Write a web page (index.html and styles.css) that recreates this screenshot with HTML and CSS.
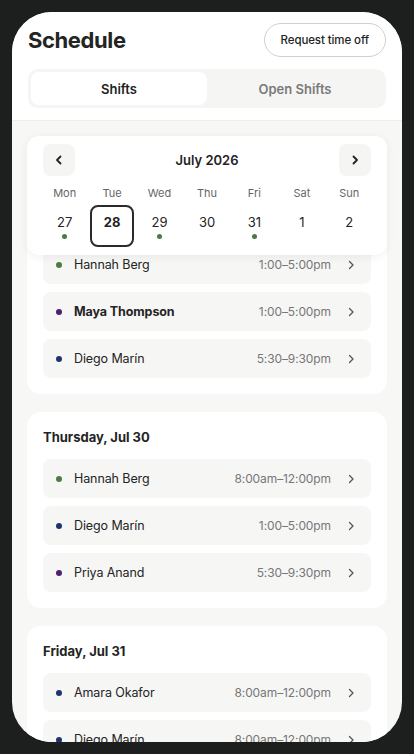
FILE: index.html
```html
<!DOCTYPE html>
<html lang="en">

<head>
  <meta charset="UTF-8">
  <title>Schedule</title>
  <link rel="stylesheet" href="styles.css">
</head>

<body>
  <div class="phone">
    <div class="header">
      <div class="top-row">
        <h1>Schedule</h1>
        <button class="request-btn">Request time off</button>
      </div>
      <div class="tabs">
        <div class="tab active">Shifts</div>
        <div class="tab">Open Shifts</div>
      </div>
    </div>

    <div class="content">
      <div class="calendar">
        <div class="cal-head">
          <button class="nav-btn">
            <svg width="12" height="12" viewBox="0 0 12 12"><path d="M7.5 2.5 4 6l3.5 3.5" fill="none" stroke="#222" stroke-width="1.8" stroke-linecap="round" stroke-linejoin="round"/></svg>
          </button>
          <div class="month">July 2026</div>
          <button class="nav-btn">
            <svg width="12" height="12" viewBox="0 0 12 12"><path d="M4.5 2.5 8 6l-3.5 3.5" fill="none" stroke="#222" stroke-width="1.8" stroke-linecap="round" stroke-linejoin="round"/></svg>
          </button>
        </div>
        <div class="week">
          <div class="dname">Mon</div>
          <div class="dname">Tue</div>
          <div class="dname">Wed</div>
          <div class="dname">Thu</div>
          <div class="dname">Fri</div>
          <div class="dname">Sat</div>
          <div class="dname">Sun</div>

          <div class="day"><span>27</span><i class="mark"></i></div>
          <div class="day selected"><span>28</span></div>
          <div class="day"><span>29</span><i class="mark"></i></div>
          <div class="day"><span>30</span></div>
          <div class="day"><span>31</span><i class="mark"></i></div>
          <div class="day"><span>1</span></div>
          <div class="day"><span>2</span></div>
        </div>
      </div>

      <div class="list">
        <div class="card">
          <div class="card-title">Wednesday, Jul 29</div>
          <div class="rows">
            <div class="row"><i class="dot green"></i><span class="name">Hannah Berg</span><span class="time">1:00–5:00pm</span><svg class="chev" width="12" height="12" viewBox="0 0 12 12"><path d="M4.5 2.5 8 6l-3.5 3.5" fill="none" stroke="#555" stroke-width="1.3" stroke-linecap="round" stroke-linejoin="round"/></svg></div>
            <div class="row"><i class="dot purple"></i><span class="name bold">Maya Thompson</span><span class="time">1:00–5:00pm</span><svg class="chev" width="12" height="12" viewBox="0 0 12 12"><path d="M4.5 2.5 8 6l-3.5 3.5" fill="none" stroke="#555" stroke-width="1.3" stroke-linecap="round" stroke-linejoin="round"/></svg></div>
            <div class="row"><i class="dot navy"></i><span class="name">Diego Marín</span><span class="time">5:30–9:30pm</span><svg class="chev" width="12" height="12" viewBox="0 0 12 12"><path d="M4.5 2.5 8 6l-3.5 3.5" fill="none" stroke="#555" stroke-width="1.3" stroke-linecap="round" stroke-linejoin="round"/></svg></div>
          </div>
        </div>

        <div class="card">
          <div class="card-title">Thursday, Jul 30</div>
          <div class="rows">
            <div class="row"><i class="dot green"></i><span class="name">Hannah Berg</span><span class="time">8:00am–12:00pm</span><svg class="chev" width="12" height="12" viewBox="0 0 12 12"><path d="M4.5 2.5 8 6l-3.5 3.5" fill="none" stroke="#555" stroke-width="1.3" stroke-linecap="round" stroke-linejoin="round"/></svg></div>
            <div class="row"><i class="dot navy"></i><span class="name">Diego Marín</span><span class="time">1:00–5:00pm</span><svg class="chev" width="12" height="12" viewBox="0 0 12 12"><path d="M4.5 2.5 8 6l-3.5 3.5" fill="none" stroke="#555" stroke-width="1.3" stroke-linecap="round" stroke-linejoin="round"/></svg></div>
            <div class="row"><i class="dot purple"></i><span class="name">Priya Anand</span><span class="time">5:30–9:30pm</span><svg class="chev" width="12" height="12" viewBox="0 0 12 12"><path d="M4.5 2.5 8 6l-3.5 3.5" fill="none" stroke="#555" stroke-width="1.3" stroke-linecap="round" stroke-linejoin="round"/></svg></div>
          </div>
        </div>

        <div class="card">
          <div class="card-title">Friday, Jul 31</div>
          <div class="rows">
            <div class="row"><i class="dot navy"></i><span class="name">Amara Okafor</span><span class="time">8:00am–12:00pm</span><svg class="chev" width="12" height="12" viewBox="0 0 12 12"><path d="M4.5 2.5 8 6l-3.5 3.5" fill="none" stroke="#555" stroke-width="1.3" stroke-linecap="round" stroke-linejoin="round"/></svg></div>
            <div class="row"><i class="dot navy"></i><span class="name">Diego Marín</span><span class="time">8:00am–12:00pm</span><svg class="chev" width="12" height="12" viewBox="0 0 12 12"><path d="M4.5 2.5 8 6l-3.5 3.5" fill="none" stroke="#555" stroke-width="1.3" stroke-linecap="round" stroke-linejoin="round"/></svg></div>
          </div>
        </div>
      </div>
    </div>
  </div>
</body>

</html>
```

FILE: styles.css
```css
body {
  margin: 0;
  background: #1d1e1e;
  font-family: Inter, 'Noto Sans', sans-serif;
  color: #242424;
}

.phone {
  margin: 12px;
  width: 390px;
  height: 730px;
  border-radius: 40px;
  overflow: hidden;
  background: #f7f7f6;
  display: flex;
  flex-direction: column;
}

.header {
  background: #fff;
  padding: 11px 16px 12px;
  border-bottom: 1px solid #ededec;
}

.top-row {
  display: flex;
  align-items: center;
  justify-content: space-between;
  height: 34px;
}

h1 {
  margin: 0;
  font-size: 22px;
  font-weight: 700;
  letter-spacing: -0.4px;
}

.request-btn {
  height: 34px;
  padding: 0 16px;
  border: 1px solid #cfcfcd;
  border-radius: 17px;
  background: #fff;
  font-family: inherit;
  font-size: 11.5px;
  font-weight: 500;
  letter-spacing: -0.1px;
  color: #222;
}

.tabs {
  margin-top: 12px;
  display: flex;
  padding: 3px;
  background: #f5f5f4;
  border-radius: 10px;
}

.tab {
  flex: 1;
  height: 33px;
  display: flex;
  align-items: center;
  justify-content: center;
  font-size: 13px;
  font-weight: 600;
  color: #7a7a7a;
  border-radius: 8px;
}

.tab.active {
  background: #fff;
  color: #222;
}

.content {
  position: relative;
  flex: 1;
  overflow: hidden;
}

.calendar {
  position: absolute;
  top: 15px;
  left: 15px;
  right: 15px;
  z-index: 2;
  background: #fff;
  border-radius: 12px;
  padding: 8px 16px;
  box-shadow: 0 2px 10px rgba(0, 0, 0, 0.06);
}

.cal-head {
  display: flex;
  align-items: center;
  justify-content: space-between;
}

.nav-btn {
  width: 32px;
  height: 32px;
  border: none;
  border-radius: 8px;
  background: #f5f5f4;
  display: flex;
  align-items: center;
  justify-content: center;
  padding: 0;
}

.month {
  font-size: 13px;
  font-weight: 600;
}

.week {
  margin-top: 9px;
  display: grid;
  grid-template-columns: repeat(7, 1fr);
  column-gap: 4px;
}

.dname {
  text-align: center;
  font-size: 11px;
  line-height: 16px;
  color: #666;
  margin-bottom: 4px;
}

.day {
  height: 42px;
  box-sizing: border-box;
  padding-top: 9px;
  display: flex;
  flex-direction: column;
  align-items: center;
  font-size: 13px;
  line-height: 16px;
}

.day.selected {
  border: 2px solid #2a2a2a;
  border-radius: 8px;
  padding-top: 7px;
  font-weight: 700;
}

.mark {
  width: 5px;
  height: 5px;
  border-radius: 50%;
  background: #4d7a44;
  margin-top: 4px;
}

.list {
  padding: 77px 15px 0;
  display: flex;
  flex-direction: column;
  gap: 18px;
}

.card {
  background: #fff;
  border-radius: 14px;
  padding: 16px;
}

.card-title {
  font-size: 13px;
  font-weight: 700;
  line-height: 18px;
  margin-bottom: 13px;
}

.rows {
  display: flex;
  flex-direction: column;
  gap: 8px;
}

.row {
  height: 39px;
  display: flex;
  align-items: center;
  padding: 0 14px 0 13px;
  background: #f6f6f5;
  border-radius: 8px;
  font-size: 12.5px;
  letter-spacing: -0.1px;
}

.dot {
  width: 6px;
  height: 6px;
  border-radius: 50%;
  margin-right: 12px;
}

.green { background: #4d7a44; }
.purple { background: #4b2271; }
.navy { background: #1f3370; }

.name {
  flex: 1;
}

.name.bold {
  font-weight: 700;
}

.time {
  color: #777;
  font-size: 12px;
  margin-right: 14px;
}
```
